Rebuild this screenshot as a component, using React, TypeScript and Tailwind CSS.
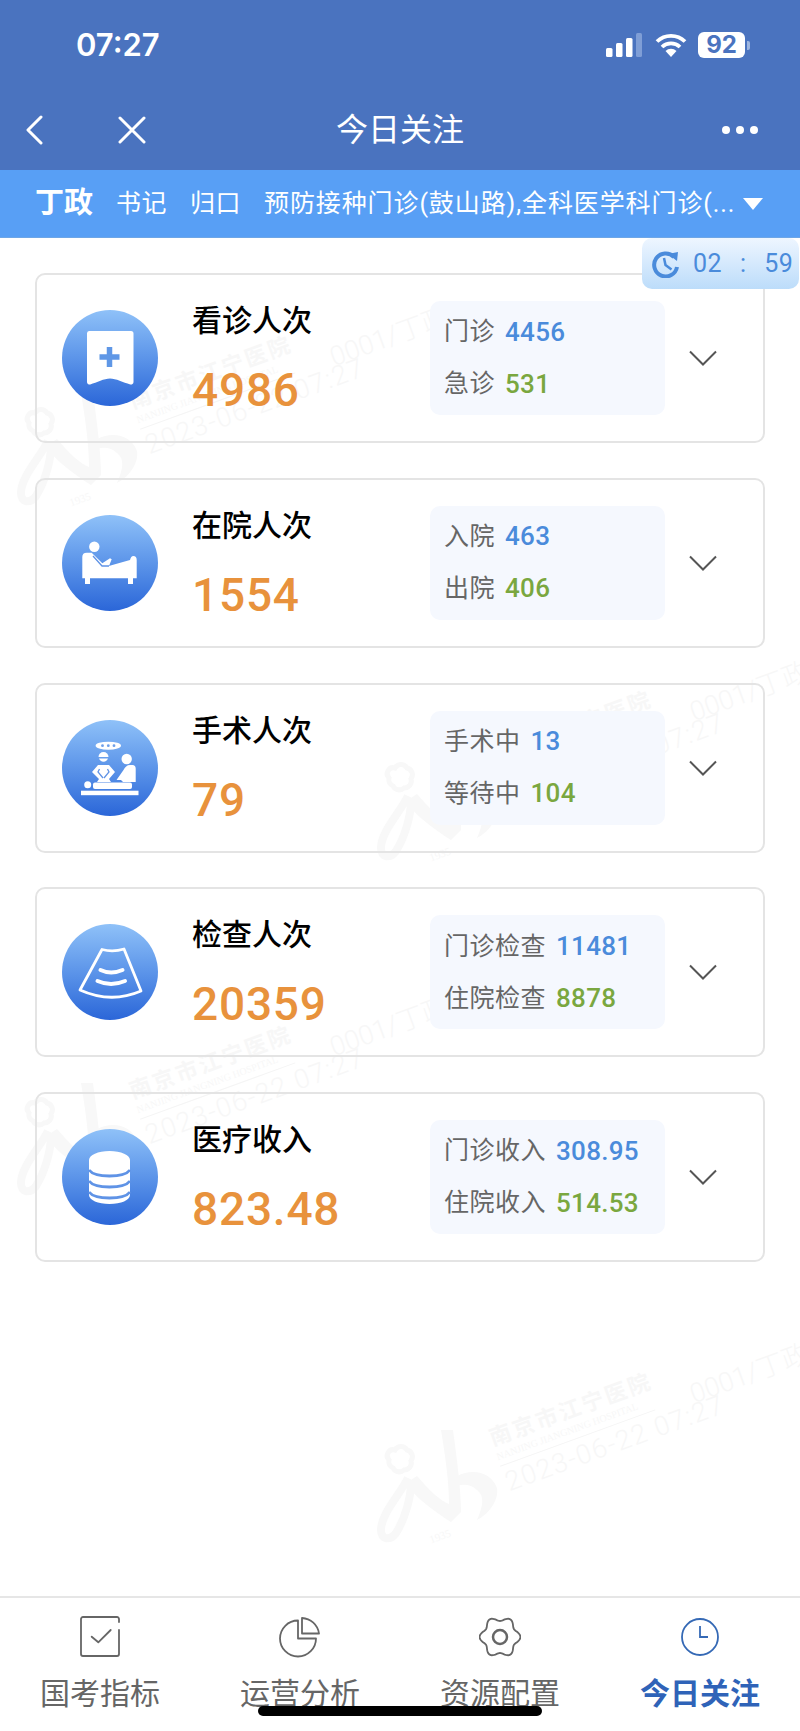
import React from "react";

type Row = { label: string; value: string };
type CardData = { title: string; value: string; icon: React.ReactNode; blue: Row; green: Row };

const Bookmark = () => (
  <svg width="96" height="96" viewBox="0 0 96 96">
    <path d="M27 21h42a2.500 2.500 0 0 1 2.500 2.500V72a2.500 2.500 0 0 1-3.200 2.400C61 72.500 54 68.500 48 68.500S35 72.500 28.200 74.400A2.500 2.500 0 0 1 25 72V23.500A2.500 2.500 0 0 1 27 21z" fill="#fff" />
    <path d="M37.500 47h20M47.500 37v20" stroke="#5f97e6" strokeWidth="5.500" fill="none" />
  </svg>
);

const Bed = () => (
  <svg width="96" height="96" viewBox="0 0 96 96" fill="#fff">
    <circle cx="32.300" cy="31.700" r="5.200" />
    <path d="M20.300 42Q20.300 37.700 24.700 37.700H29.700L40.300 48.300 48 43.300 49.700 44.300 47 51 50.300 50 68 45Q69 41 71.300 41 74.700 41 74.700 45V63.300H71V69H66V63.300H28V69H23V63.300H20.300z" />
    <path d="M31 41l9 10h7" fill="none" stroke="#5f93e6" strokeWidth="1.300" />
  </svg>
);

const Surgery = () => (
  <svg width="96" height="96" viewBox="0 0 96 96" fill="#fff">
    <ellipse cx="46.300" cy="25.700" rx="12.700" ry="4" />
    <g fill="#6ea0ea">
      <circle cx="40.500" cy="25.700" r="1.400" />
      <circle cx="46.300" cy="25.700" r="1.400" />
      <circle cx="52" cy="25.700" r="1.400" />
    </g>
    <path d="M36.500 37a5 5 0 0 1 10 0z" />
    <path d="M37 38.500h9a4.800 4.800 0 0 1-9 0z" />
    <path d="M36 45h11l6 7-6 7 2 3H35l2-3-7-7z" />
    <path d="M37.500 49l-1.500 3 5 6M45.500 49l1.500 3-5 6" fill="none" stroke="#5f93e6" strokeWidth="1.300" />
    <circle cx="64.700" cy="39" r="5.200" />
    <path d="M54.500 60l7-10c1.500-3 3.500-5 6.500-5h2.500c2 0 3.200 1.500 3.200 3.500V62H61l-2-2z" />
    <circle cx="25.700" cy="64.700" r="3.500" />
    <rect x="31" y="62.500" width="39" height="6.500" rx="2" />
    <rect x="19" y="70.700" width="57.500" height="4.500" />
  </svg>
);

const Ultrasound = () => (
  <svg width="96" height="96" viewBox="0 0 96 96" fill="none" stroke="#fff">
    <path d="M40 25.500Q51 28.500 62 25L79 67Q49 80 18 66z" strokeWidth="2.800" strokeLinejoin="round" />
    <path d="M38.500 46Q49 51 60.500 46" strokeWidth="4" strokeLinecap="round" />
    <path d="M35.500 57Q49 63 63 57" strokeWidth="4" strokeLinecap="round" />
  </svg>
);

const Database = () => (
  <svg width="96" height="96" viewBox="0 0 96 96">
    <path d="M27 31c0-5 9-9 20.500-9S68 26 68 31v35c0 5-9 9-20.500 9S27 71 27 66z" fill="#fff" />
    <path d="M27 41c3 4 11 6 20.500 6S65 45 68 41M27 52c3 4 11 6 20.500 6S65 56 68 52M27 63c3 4 11 6 20.500 6S65 67 68 63" stroke="#5f93e6" strokeWidth="2.800" fill="none" />
  </svg>
);

const cards: CardData[] = [
  { title: "看诊人次", value: "4986", icon: <Bookmark />, blue: { label: "门诊", value: "4456" }, green: { label: "急诊", value: "531" } },
  { title: "在院人次", value: "1554", icon: <Bed />, blue: { label: "入院", value: "463" }, green: { label: "出院", value: "406" } },
  { title: "手术人次", value: "79", icon: <Surgery />, blue: { label: "手术中", value: "13" }, green: { label: "等待中", value: "104" } },
  { title: "检查人次", value: "20359", icon: <Ultrasound />, blue: { label: "门诊检查", value: "11481" }, green: { label: "住院检查", value: "8878" } },
  { title: "医疗收入", value: "823.48", icon: <Database />, blue: { label: "门诊收入", value: "308.95" }, green: { label: "住院收入", value: "514.53" } },
];

const Watermark = ({ className }: { className: string }) => (
  <div className={`absolute pointer-events-none w-[440px] h-[130px] text-[#f7f7f7] ${className}`}>
    <svg className="absolute left-0 top-0" width="122" height="114" viewBox="0 0 122 114" fill="#f8f8f8">
      <path d="M12 30a6 6 0 0 1 6-10 7 7 0 0 1 12 0 7 7 0 0 1 4 11 7 7 0 0 1-7 9 7 7 0 0 1-11-2 7 7 0 0 1-4-8z" fill="none" stroke="#f8f8f8" strokeWidth="5" />
      <path d="M31 48C22 66 4 84 4 100c0 10 9 11 15 3 9-14 15-36 15-50" fill="none" stroke="#f8f8f8" strokeWidth="8" />
      <path d="M64 0L76 0C80 30 84 60 84 82L74 92C58 82 42 70 28 54L40 46C52 60 62 70 72 74 72 50 68 25 64 0z" />
      <path d="M80 46C96 38 114 42 120 58 122 70 112 84 100 90 106 76 108 66 100 60 94 54 86 54 80 56z" />
    </svg>
    <div className="absolute left-[52px] top-[100px] -rotate-[20deg] text-[11px] leading-[12px] font-['Liberation_Serif',serif]">1935</div>
    <div className="absolute left-[122px] top-[-5px] origin-left -rotate-[20deg] whitespace-nowrap">
      <div className="text-[22px] leading-[26px] tracking-[2.500px] font-bold">南京市江宁医院</div>
      <div className="text-[10px] leading-[12px] border-b border-[#f5f5f5] pb-[3px] w-[165px] font-['Liberation_Serif',serif]">NANJING JIANGNING HOSPITAL</div>
      <div className="text-[27px] leading-[34px] font-light tracking-[1.500px]">2023-06-22 07:27</div>
    </div>
    <div className="absolute left-[314px] top-[-50px] origin-left -rotate-[20deg] whitespace-nowrap text-[27px] leading-[30px] font-light">0001/丁政</div>
  </div>
);

const Chevron = () => (
  <svg width="28" height="16" viewBox="0 0 28 16" fill="none" stroke="#555" strokeWidth="2">
    <path d="M1 1.500l13 13 13-13" />
  </svg>
);

const Card = ({ d }: { d: CardData }) => (
  <div className="relative flex items-center h-[170px] border-2 border-[#e4e4e4] rounded-[10px]">
    <div className="ml-[25px] w-[96px] h-[96px] shrink-0 rounded-full bg-gradient-to-b from-[#8fc1f8] to-[#2b66d8]">{d.icon}</div>
    <div className="ml-[34px] w-[238px] shrink-0">
      <div className="text-[30px] leading-[36px] font-medium text-black">{d.title}</div>
      <div className="mt-[28px] text-[46px] leading-[46px] font-medium tracking-[0.800px] text-[#e8923c]">{d.value}</div>
    </div>
    <div className="w-[235px] h-[114px] shrink-0 rounded-[10px] bg-[#f5f8fe] pl-[14px] flex flex-col justify-center">
      <div className="h-[52px] flex items-center gap-[10px]">
        <span className="text-[25px] tracking-[0.500px] text-[#666]">{d.blue.label}</span>
        <span className="text-[26px] font-medium tracking-[0.300px] text-[#4a8bdb]">{d.blue.value}</span>
      </div>
      <div className="h-[52px] flex items-center gap-[10px]">
        <span className="text-[25px] tracking-[0.500px] text-[#666]">{d.green.label}</span>
        <span className="text-[26px] font-medium tracking-[0.300px] text-[#7aa73f]">{d.green.value}</span>
      </div>
    </div>
    <div className="ml-[24px]"><Chevron /></div>
  </div>
);

const gearPoints = Array.from({ length: 120 }, (_, i) => {
  const a = (i / 120) * Math.PI * 2;
  const r = 18.2 + 2.2 * Math.cos(6 * a);
  return `${(21 + r * Math.cos(a)).toFixed(2)},${(21 + r * Math.sin(a)).toFixed(2)}`;
}).join(" ");

const tabs = [
  {
    label: "国考指标",
    icon: (
      <svg width="42" height="42" viewBox="0 0 42 42" fill="none" stroke="#666" strokeWidth="1.800" strokeLinejoin="round" strokeLinecap="round">
        <path d="M40 6V3a2 2 0 0 0-2-2H4A2 2 0 0 0 2 3v35a2 2 0 0 0 2 2h34a2 2 0 0 0 2-2V14" />
        <path d="M12.700 20.700l6.600 5.600L31.700 14" />
      </svg>
    ),
  },
  {
    label: "运营分析",
    icon: (
      <svg width="42" height="42" viewBox="0 0 42 42" fill="none" stroke="#666" strokeWidth="1.800" strokeLinejoin="round">
        <path d="M19 4.500A18 18 0 1 0 37 22.500H19z" />
        <path d="M23 2A18 18 0 0 1 40 17.500H23z" />
      </svg>
    ),
  },
  {
    label: "资源配置",
    icon: (
      <svg width="42" height="42" viewBox="0 0 42 42" fill="none" stroke="#666" strokeWidth="1.800">
        <polygon points={gearPoints} />
        <circle cx="21" cy="21" r="7" strokeWidth="2.500" />
      </svg>
    ),
  },
  {
    label: "今日关注",
    active: true,
    icon: (
      <svg width="42" height="42" viewBox="0 0 42 42" fill="none" stroke="#3569b5" strokeWidth="1.800">
        <circle cx="21" cy="21" r="18" />
        <path d="M21 10v11h8" />
      </svg>
    ),
  },
];

export default function App() {
  return (
    <div className="relative w-[800px] h-[1731px] flex flex-col overflow-hidden bg-white font-['Roboto','Noto_Sans_CJK_SC',sans-serif]">
      <header className="h-[170px] shrink-0 bg-[#4a73bf] text-white flex flex-col">
        <div className="h-[90px] flex items-center pl-[76px] pr-[50px]">
          <span className="text-[31px] font-semibold font-['Inter',sans-serif]">07:27</span>
          <div className="ml-auto flex items-center">
            <svg width="36" height="24" viewBox="0 0 36 24" fill="#fff">
              <rect x="0" y="15" width="6.500" height="9" rx="1.500" />
              <rect x="10" y="10" width="6.500" height="14" rx="1.500" />
              <rect x="20" y="5" width="6.500" height="19" rx="1.500" />
              <rect x="30" y="0" width="6" height="24" rx="1.500" fill="#7f9ed6" />
            </svg>
            <svg className="ml-[13px]" width="32" height="24" viewBox="0 0 32 24" fill="none" stroke="#fff" strokeWidth="3.800">
              <path d="M2 8.500a20 20 0 0 1 28 0M7 14a13 13 0 0 1 18 0" />
              <path d="M16 24l-5.500-6a8 8 0 0 1 11 0z" fill="#fff" stroke="none" />
            </svg>
            <div className="ml-[11px] w-[47px] h-[26px] rounded-[6px] bg-white text-[#4a73bf] text-[24px] leading-[26px] font-bold text-center font-['Inter',sans-serif]">92</div>
            <div className="ml-[2px] w-[3px] h-[9px] rounded-r-[2px] bg-[#9db5df]" />
          </div>
        </div>
        <div className="relative flex-1 flex items-center justify-between pl-[25px] pr-[42px]">
          <div className="flex items-center">
            <svg width="18" height="30" viewBox="0 0 18 30" fill="none" stroke="#fff" strokeWidth="3" strokeLinecap="round" strokeLinejoin="round">
              <path d="M16 2L3 15l13 13" />
            </svg>
            <svg className="ml-[75px]" width="28" height="28" viewBox="0 0 28 28" fill="none" stroke="#fff" strokeWidth="3" strokeLinecap="round">
              <path d="M2 2l24 24M26 2L2 26" />
            </svg>
          </div>
          <div className="text-[32px] leading-[40px] absolute left-[336px] top-[20px]">今日关注</div>
          <div className="flex gap-[6px]">
            <span className="w-[8px] h-[8px] rounded-full bg-white" />
            <span className="w-[8px] h-[8px] rounded-full bg-white" />
            <span className="w-[8px] h-[8px] rounded-full bg-white" />
          </div>
        </div>
      </header>

      <div className="h-[68px] shrink-0 bg-[#589ff5] border-b border-[#6ea6e6] flex items-center pl-[35px] text-white whitespace-nowrap">
        <span className="text-[29px] font-bold w-[81px]">丁政</span>
        <span className="text-[25px] tracking-[0.500px] w-[74px]">书记</span>
        <span className="text-[25px] tracking-[0.500px] w-[74px]">归口</span>
        <span className="text-[25px] w-[479px] tracking-[0.900px]">预防接种门诊(鼓山路),全科医学科门诊(...</span>
        <span className="w-0 h-0 border-x-[10px] border-x-transparent border-t-[12px] border-t-white" />
      </div>

      <main className="relative flex-1">
        <Watermark className="left-[17px] top-[155px]" />
        <Watermark className="left-[377px] top-[510px]" />
        <Watermark className="left-[17px] top-[845px]" />
        <Watermark className="left-[377px] top-[1192px]" />

        <div className="relative pt-[35px] px-[35px] flex flex-col gap-[34.750px]">
          {cards.map((c) => (
            <Card key={c.title} d={c} />
          ))}
        </div>

        <div className="absolute right-[1px] top-0 w-[157px] h-[51px] rounded-[10px] bg-gradient-to-b from-[#eef6ff] to-[#bcdcfa] flex items-center pl-[8px] text-[#4a8bdb]">
          <svg width="30" height="28" viewBox="0 0 30 28" fill="none" stroke="#4a8bdb" strokeWidth="4">
            <path d="M24 7A11.500 11.500 0 1 0 27 17" />
            <path d="M14 8l1.500 7 6 4.500" strokeWidth="2.500" />
            <path d="M18 4l10-2-1 9z" fill="#4a8bdb" stroke="none" />
          </svg>
          <span className="ml-[13px] text-[25px] leading-[30px] tracking-[0.500px]">02</span>
          <span className="ml-[18px] text-[25px] leading-[30px]">:</span>
          <span className="ml-[18px] text-[25px] leading-[30px] tracking-[0.500px]">59</span>
        </div>
      </main>

      <nav className="h-[135px] shrink-0 relative bg-white border-t-2 border-[#e6e6e6] flex pt-[18px]">
        {tabs.map((t) => (
          <div key={t.label} className="w-[200px] flex flex-col items-center">
            {t.icon}
            <span className={`mt-[18px] text-[30px] leading-[36px] ${t.active ? "font-bold text-[#2f63b8]" : "text-[#666]"}`}>{t.label}</span>
          </div>
        ))}
        <div className="absolute left-[258px] bottom-[15px] w-[284px] h-[10px] rounded-full bg-black" />
      </nav>
    </div>
  );
}
